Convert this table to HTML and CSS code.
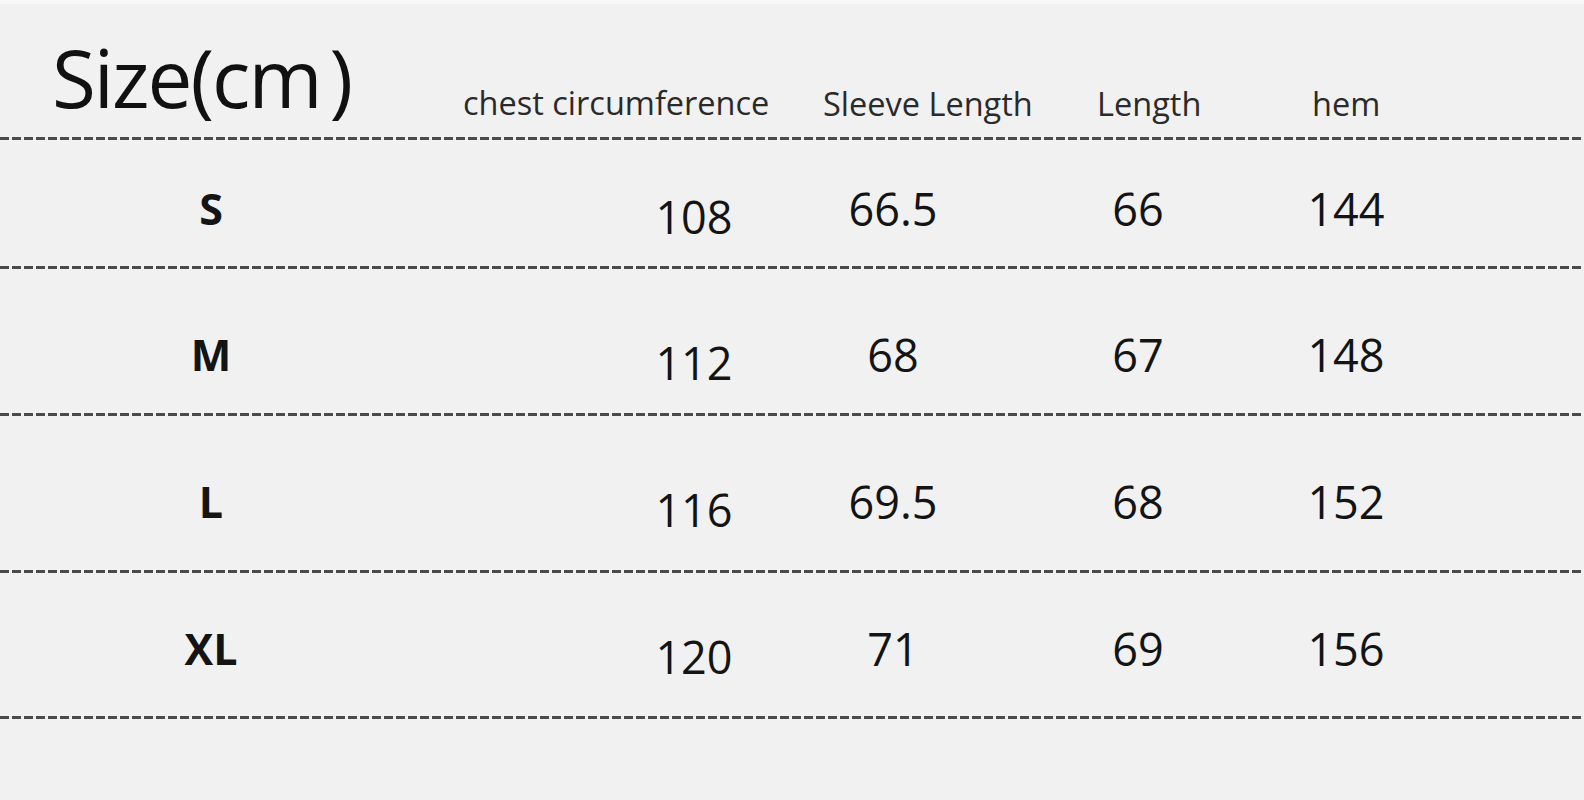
FILE: index.html
```html
<!DOCTYPE html>
<html lang="en">
<head>
<meta charset="utf-8">
<title>Size chart</title>
<link rel="stylesheet" href="styles.css">
</head>
<body>
<main class="chart">
  <header class="head">
    <div class="title">Size(cm<span class="paren">)</span></div>
    <div class="hcol h-chest">chest circumference</div>
    <div class="hcol h-sleeve">Sleeve Length</div>
    <div class="hcol h-length">Length</div>
    <div class="hcol h-hem">hem</div>
  </header>
  <div class="rule"></div>
  <div class="row r1">
    <div class="cell label">S</div>
    <div class="cell chest">108</div>
    <div class="cell sleeve">66.5</div>
    <div class="cell length">66</div>
    <div class="cell hem">144</div>
  </div>
  <div class="rule"></div>
  <div class="row r2">
    <div class="cell label">M</div>
    <div class="cell chest">112</div>
    <div class="cell sleeve">68</div>
    <div class="cell length">67</div>
    <div class="cell hem">148</div>
  </div>
  <div class="rule"></div>
  <div class="row r3">
    <div class="cell label">L</div>
    <div class="cell chest">116</div>
    <div class="cell sleeve">69.5</div>
    <div class="cell length">68</div>
    <div class="cell hem">152</div>
  </div>
  <div class="rule"></div>
  <div class="row r4">
    <div class="cell label">XL</div>
    <div class="cell chest">120</div>
    <div class="cell sleeve">71</div>
    <div class="cell length">69</div>
    <div class="cell hem">156</div>
  </div>
  <div class="rule"></div>
</main>
</body>
</html>
```

FILE: styles.css
```css
html, body {
  margin: 0;
  padding: 0;
  background: #f1f1f1;
}

body {
  font-family: "Open Sans", "Noto Sans", "Liberation Sans", sans-serif;
  color: #141414;
  width: 1584px;
  height: 800px;
  overflow: hidden;
}

.chart {
  display: flex;
  flex-direction: column;
}

/* header */
.head {
  box-sizing: border-box;
  height: 137px;
  border-top: 4px solid #f8f8f8;
  display: grid;
  grid-template-columns: 411px 360px 276px 215px auto;
  padding-left: 52px;
  align-items: start;
}

.title {
  font-size: 80px;
  line-height: 110px;
  letter-spacing: -2px;
  padding-top: 18px;
  color: #111;
  white-space: nowrap;
}

.paren {
  margin-left: 9px;
}

.hcol {
  font-size: 32.5px;
  line-height: 44px;
  color: #2a2a2a;
  white-space: nowrap;
  padding-top: 77px;
}

.h-chest { margin-left: 0; }
.h-sleeve { padding-top: 78px; margin-left: 0; }
.h-length { padding-top: 78px; margin-left: -2px; }
.h-hem { padding-top: 78px; margin-left: -2px; }

/* dashed rules */
.rule {
  height: 3px;
  background: repeating-linear-gradient(90deg, #4a4a4a 0 9px, transparent 9px 12px);
}

/* rows */
.row {
  box-sizing: border-box;
  display: grid;
  grid-template-columns: 422px 192px 160px 39px 160px 85px 160px 48px 160px;
  align-items: start;
}

.r1 { height: 126px; padding-top: 38px; }
.r2 { height: 144px; padding-top: 55px; }
.r3 { height: 154px; padding-top: 55px; }
.r4 { height: 143px; padding-top: 45px; }

.cell {
  text-align: center;
  font-size: 45px;
  line-height: 61px;
  white-space: nowrap;
}

.label {
  grid-column: 1;
  font-size: 43px;
  font-weight: 700;
  line-height: 58px;
  padding-top: 2px;
}

.chest { grid-column: 3; padding-top: 8px; }
.sleeve { grid-column: 5; }
.length { grid-column: 7; }
.hem { grid-column: 9; }
```
